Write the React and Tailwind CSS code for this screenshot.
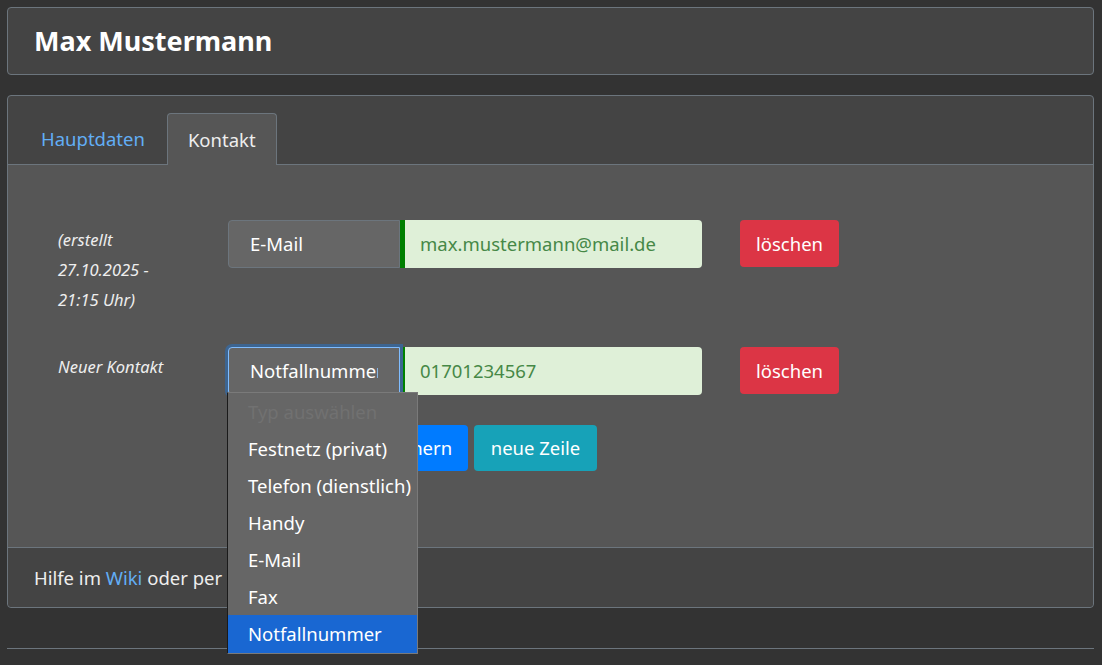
// App.jsx
const options = [
  "Festnetz (privat)",
  "Telefon (dienstlich)",
  "Handy",
  "E-Mail",
  "Fax",
];

const ContactRow = ({ label, type, value, focused, children }) => (
  <div className="flex items-start">
    <div className="w-[220px] pl-[50px] pr-[48px] pt-[5px] text-[16.5px] italic leading-[30px] text-[#eee]">
      {label}
    </div>
    <div className="relative flex h-[48px] w-[474px]">
      <div
        className={
          focused
            ? "relative z-10 flex w-[172px] items-center rounded-l-[4px] border border-[#80bdff] bg-[#666] px-[21px] ring-[3px] ring-[#3d6591]"
            : "flex w-[172px] items-center rounded-l-[4px] border border-[#6c757d] bg-[#666] px-[21px]"
        }
      >
        <span className="block overflow-hidden whitespace-nowrap text-white">
          {type}
        </span>
      </div>
      <div className="flex flex-1 items-center rounded-r-[4px] border-l-[5px] border-[#008000] bg-[#dff0d8] px-[15px] text-[#468847]">
        {value}
      </div>
      {children}
    </div>
    <button className="ml-[38px] h-[47px] rounded-[4px] bg-[#dc3545] px-[16px] text-white">
      löschen
    </button>
  </div>
);

export default function App() {
  return (
    <div className="min-h-screen bg-[#333] pl-[7px] pr-[8px] pt-[7px] font-['Noto_Sans',sans-serif] text-[18.5px] text-[#eee]">
      <div className="flex h-[68px] items-center rounded-[4px] border border-[#6c757d] bg-[#444] px-[26px]">
        <h1 className="text-[27px] font-bold text-white">Max Mustermann</h1>
      </div>

      <div className="mt-[20px] rounded-[4px] border border-[#6c757d] bg-[#444]">
        <div className="flex border-b border-[#6c757d] px-[15px] pt-[17px]">
          <a className="flex h-[51px] items-center pl-[18px] pr-[22px] text-[#62aef5]">
            Hauptdaten
          </a>
          <a className="-mb-px flex h-[52px] items-center rounded-t-[4px] border border-b-0 border-[#6c757d] bg-[#565656] px-[20px] text-[#eee]">
            Kontakt
          </a>
        </div>

        <div className="h-[382px] bg-[#565656] pt-[55px]">
          <ContactRow
            label="(erstellt 27.10.2025 - 21:15 Uhr)"
            type="E-Mail"
            value="max.mustermann@mail.de"
          />
          <div className="mt-[32px]">
            <ContactRow
              label="Neuer Kontakt"
              type="Notfallnummer"
              value="01701234567"
              focused
            >
              <div className="absolute left-[-1px] top-[45px] z-20 w-[191px] border border-[#7a7a7a] border-l-[#1a1a1a] bg-[#666]">
                <div className="flex h-[37px] items-center px-[20px] text-[#717171]">
                  Typ auswählen
                </div>
                {options.map((o) => (
                  <div
                    key={o}
                    className="flex h-[37px] items-center whitespace-nowrap px-[20px] text-white"
                  >
                    {o}
                  </div>
                ))}
                <div className="flex h-[38px] items-center bg-[#1967d2] px-[20px] text-white">
                  Notfallnummer
                </div>
              </div>
            </ContactRow>
          </div>
          <div className="mt-[30px] flex gap-[6px] pl-[343px]">
            <button className="h-[46px] w-[117px] rounded-[4px] bg-[#007bff] text-white">
              speichern
            </button>
            <button className="h-[46px] w-[123px] rounded-[4px] bg-[#17a2b8] text-white">
              neue Zeile
            </button>
          </div>
        </div>

        <div className="flex h-[60px] items-center rounded-b-[4px] border-t border-[#6c757d] bg-[#444] px-[26px] text-[#eee]">
          <span>
            Hilfe im <a className="text-[#62aef5]">Wiki</a> oder per Mail.
          </span>
        </div>
      </div>

      <hr className="mt-[40px] border-t border-[#6c757d]" />
    </div>
  );
}
